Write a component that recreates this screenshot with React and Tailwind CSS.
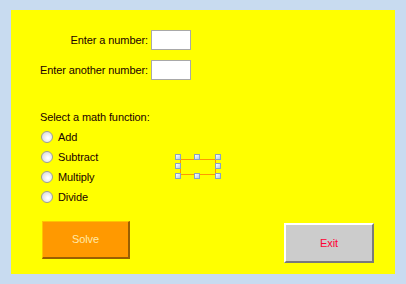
const OPTIONS = ['Add', 'Subtract', 'Multiply', 'Divide'];

function Handle({ className }) {
  return (
    <span
      className={`absolute w-[6px] h-[6px] border border-[#8aa2c2] bg-[linear-gradient(135deg,#ffffff,#b4cbe8)] ${className}`}
    />
  );
}

function Radio({ label }) {
  return (
    <label className="flex items-center h-[20px] gap-[5px]">
      <span className="w-[12px] h-[12px] rounded-full border border-[#9c9c9c] bg-[radial-gradient(circle_at_60%_60%,#ffffff_10%,#d6d6d6_90%)]" />
      <span>{label}</span>
    </label>
  );
}

export default function App() {
  return (
    <div className="w-[406px] h-[284px] bg-[#c8dbf0] pt-[10px] pl-[11px] font-['Liberation_Sans',sans-serif] text-[11px] tracking-[-0.1px] text-[#1a0000]">
      <div className="relative w-[384px] h-[264px] bg-[#ffff00]">
        <div className="pt-[20px] ml-[29px] grid grid-cols-[auto_40px] gap-x-[3px] gap-y-[10px] w-max items-center">
          <span className="text-right leading-[20px]">Enter a number:</span>
          <div className="h-[20px] bg-white border border-[#a8a8a8]" />
          <span className="text-right leading-[20px]">Enter another number:</span>
          <div className="h-[20px] bg-white border border-[#a8a8a8]" />
        </div>

        <div className="mt-[29px] ml-[29px] leading-[16px]">Select a math function:</div>
        <div className="mt-[2px] ml-[30px] flex flex-col">
          {OPTIONS.map((o) => (
            <Radio key={o} label={o} />
          ))}
        </div>

        <div className="mt-[14px] flex items-start justify-between">
          <button className="ml-[31px] w-[88px] h-[38px] bg-[#ff9900] border-t border-l border-[#ffc400] border-b-2 border-r-2 border-b-[#9a6000] border-r-[#9a6000] text-[#ffe9a8]">
            Solve
          </button>
          <button className="mt-[2px] mr-[21px] w-[90px] h-[40px] bg-[#cccccc] border-t-2 border-l-2 border-t-white border-l-white border-b-2 border-r-2 border-b-[#7a7a7a] border-r-[#7a7a7a] text-[#ff0033]">
            Exit
          </button>
        </div>

        <div className="absolute left-[164px] top-[144px] w-[46px] h-[25px]">
          <div className="absolute left-[5px] top-[5px] right-[5px] bottom-[4px] border border-[#ff9900]" />
          <Handle className="left-0 top-0" />
          <Handle className="left-[19px] top-0" />
          <Handle className="right-0 top-0" />
          <Handle className="left-0 top-[9px]" />
          <Handle className="right-0 top-[9px]" />
          <Handle className="left-0 bottom-0" />
          <Handle className="left-[19px] bottom-0" />
          <Handle className="right-0 bottom-0" />
        </div>
      </div>
    </div>
  );
}
